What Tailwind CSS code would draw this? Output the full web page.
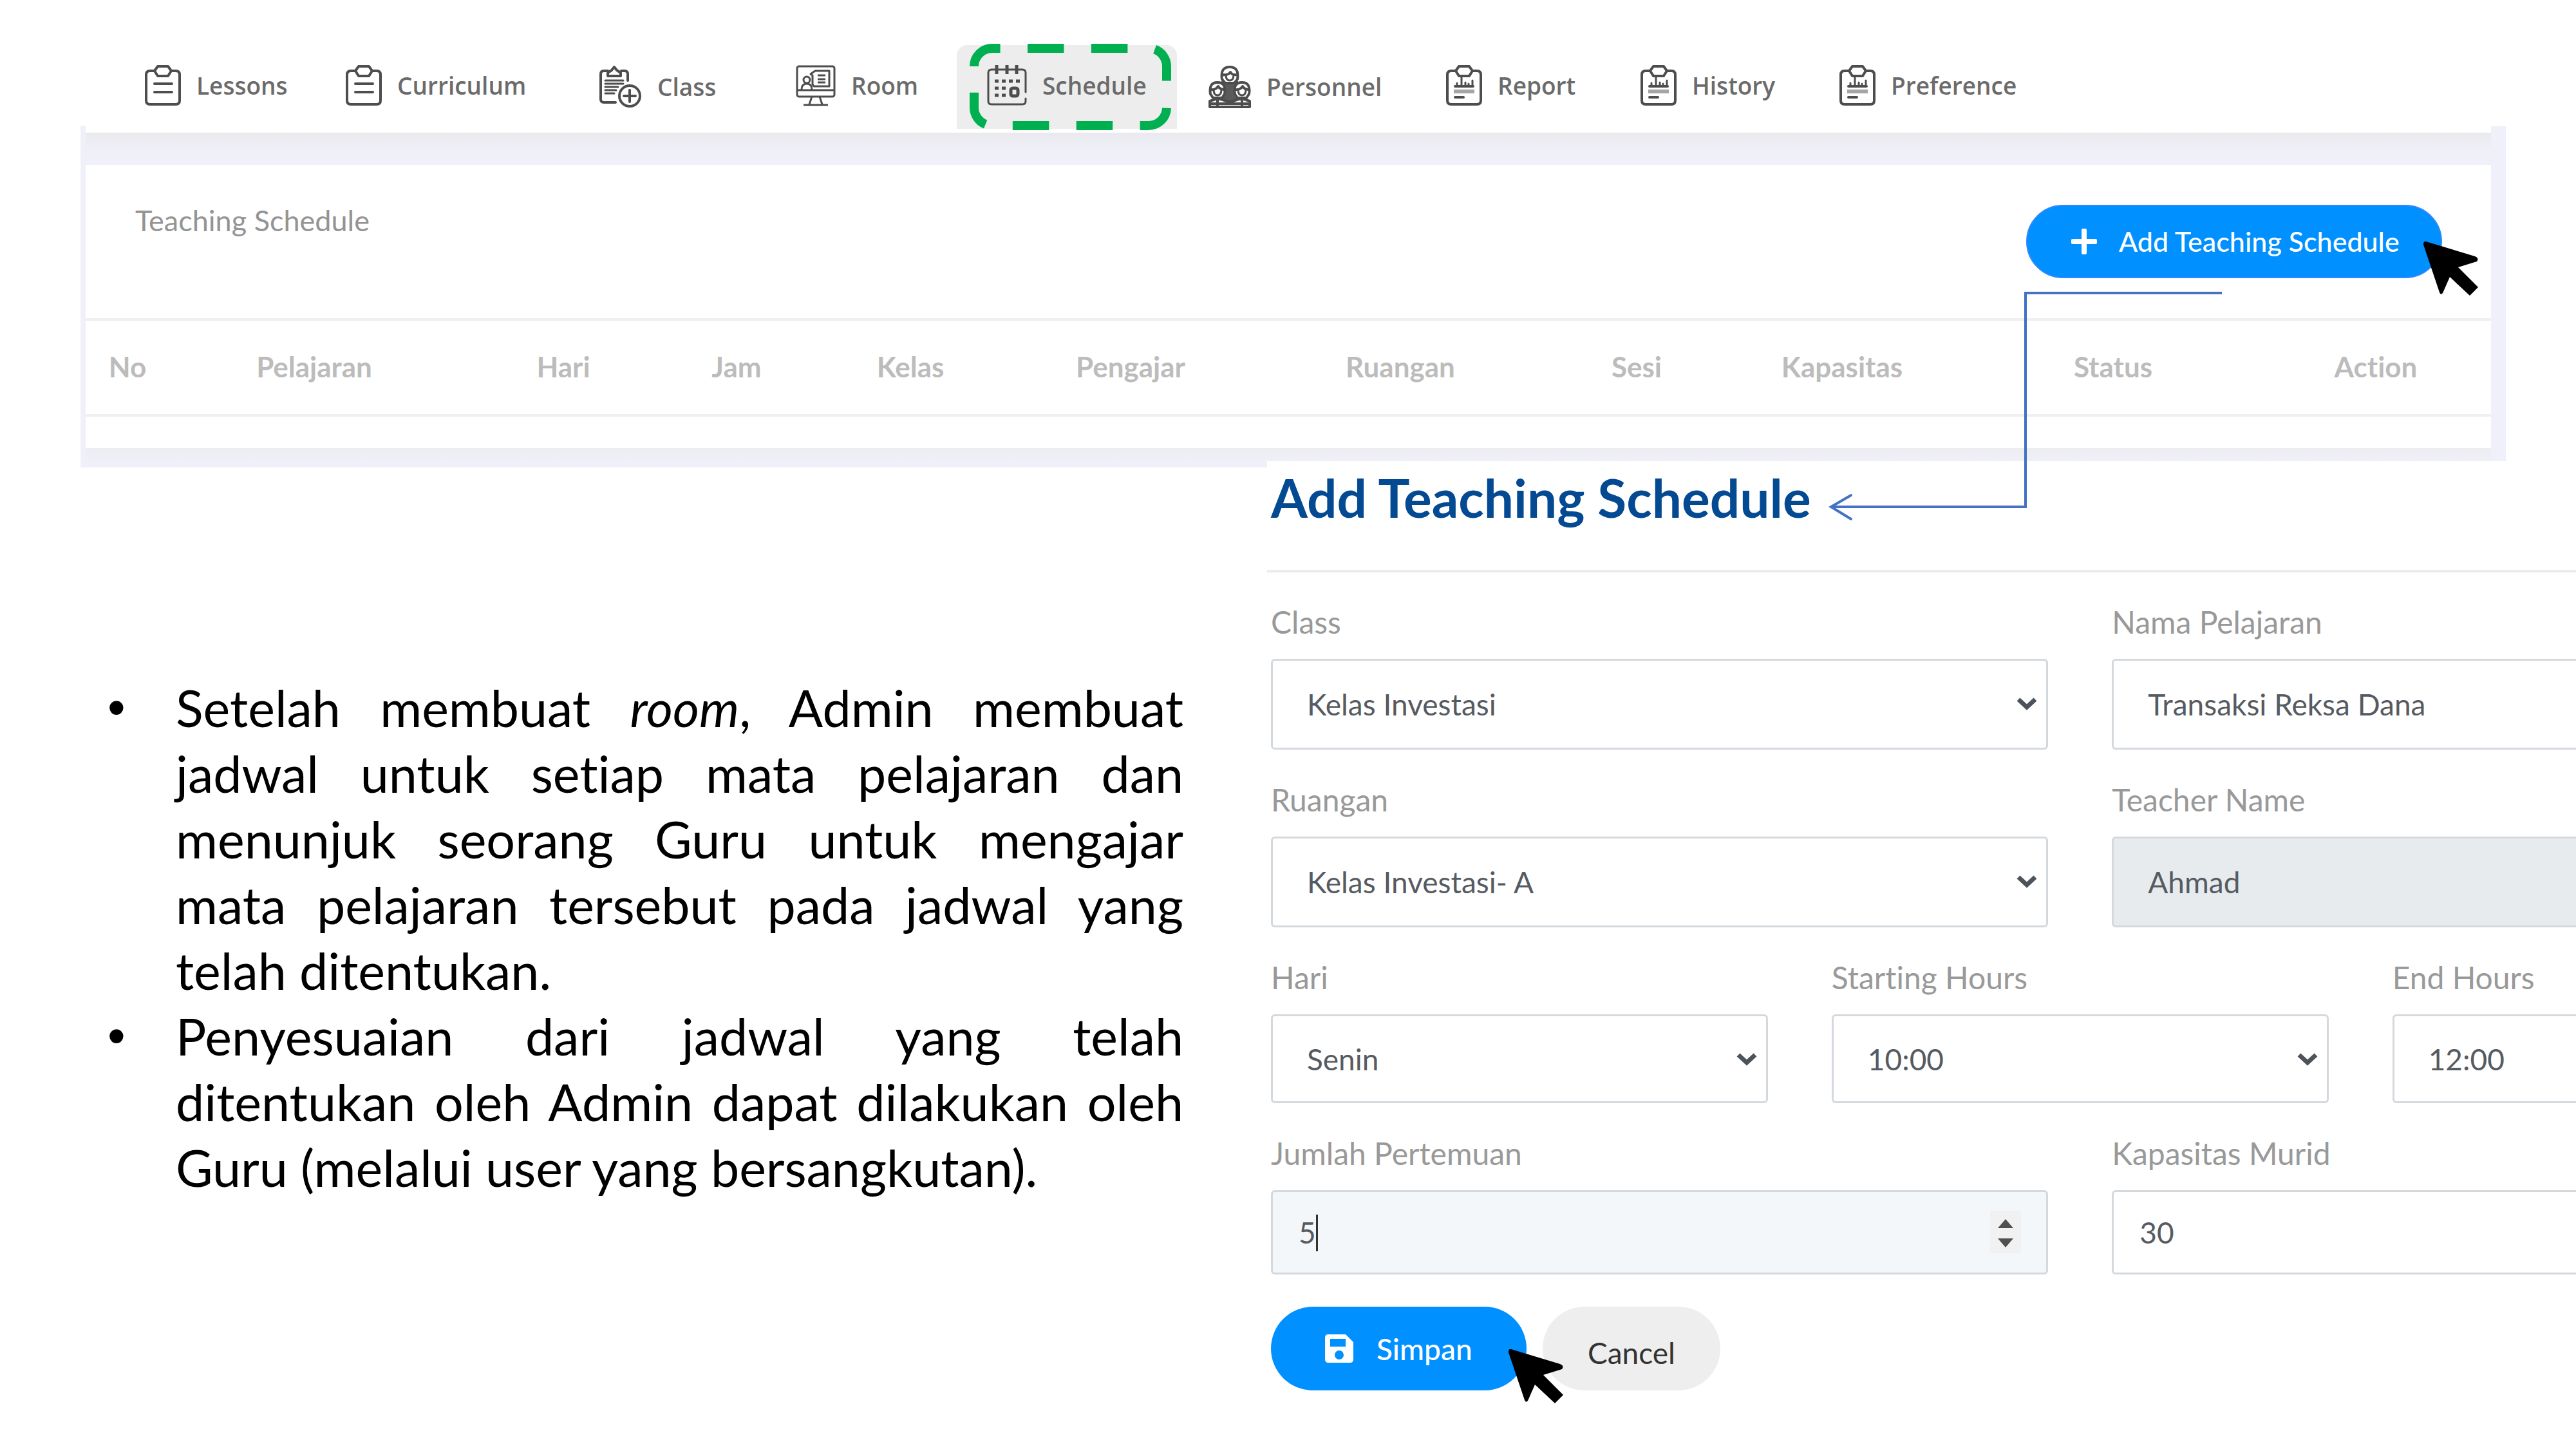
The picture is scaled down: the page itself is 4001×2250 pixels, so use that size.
<!DOCTYPE html>
<html lang="id">
<head>
<meta charset="utf-8">
<title>Teaching Schedule</title>
<script src="https://cdn.jsdelivr.net/npm/@tailwindcss/browser@4"></script>
</head>
<body class="bg-white font-['Lato',sans-serif] overflow-x-hidden [font-variant-ligatures:none]">

<svg class="hidden" aria-hidden="true">
  <symbol id="clipboard" viewBox="0 0 56 64">
    <g fill="none" stroke="#4d4d4d" stroke-width="4" stroke-linecap="round" stroke-linejoin="round">
      <path d="M15 9H8q-6 0-6 6v40q0 6 6 6h40q6 0 6-6V15q0-6-6-6h-7"/>
      <path d="M20 2h16l5 7-5 8H20l-5-8z"/>
      <path d="M15 29h27M15 42h27"/>
    </g>
  </symbol>
  <symbol id="report" viewBox="0 0 56 64">
    <g fill="none" stroke="#4d4d4d" stroke-width="4" stroke-linecap="round" stroke-linejoin="round">
      <path d="M15 9H8q-6 0-6 6v40q0 6 6 6h40q6 0 6-6V15q0-6-6-6h-7"/>
      <path d="M20 2h16l5 7-5 8H20l-5-8z"/>
      <path d="M14 33h28M14 50h13"/>
      <path stroke-width="3" d="M17 32v-4M24 32V19M30 32v-5M35 32v-3M41 32v-8"/>
      <path stroke="#a5a5a5" stroke-width="6" stroke-linecap="butt" d="M12 41h32"/>
    </g>
  </symbol>
  <symbol id="cursor" viewBox="0 0 86 86">
    <path d="M4 0 80 23q7 3 3 8L54 40l31 31-13 13-31-29-11 25q-3 4-5-1L0 5Q0-1 4 0z"/>
  </symbol>
  <symbol id="chevron" viewBox="0 0 32 20">
    <path d="M3 3l13 12L29 3" fill="none" stroke="#4d535a" stroke-width="7"/>
  </symbol>
</svg>

<header class="h-[196px] pt-[68px]">
  <nav class="grid grid-cols-[312fr_394fr_305fr_297fr_344fr_369fr_302fr_309fr_1144fr] pl-[225px] h-[130px] items-center text-[37px] leading-[48px] font-semibold text-[#6b6b6b] font-['Open_Sans',sans-serif]">
    <a href="#" class="flex items-center gap-[24px]"><svg class="w-[56px] h-[64px]"><use href="#clipboard"/></svg>Lessons</a>
    <a href="#" class="flex items-center gap-[24px]"><svg class="w-[56px] h-[64px]"><use href="#clipboard"/></svg>Curriculum</a>
    <a href="#" class="flex items-center gap-[24px] pt-[4px]">
      <svg class="w-[66px] h-[66px]" viewBox="0 0 66 66" fill="none" stroke="#4d4d4d" stroke-width="4" stroke-linecap="round" stroke-linejoin="round">
        <path d="M13 8H7q-5 0-5 5v39q0 5 5 5h18M34 8h5q5 0 5 5v10"/>
        <path d="M23 2l4 5 6 4v5H13v-5l6-4z"/>
        <path stroke-width="3" d="M9 23h28M9 28h28M9 33h20M9 38h17M9 43h14"/>
        <circle cx="47" cy="47" r="16"/><path d="M47 38v18M38 47h18"/>
      </svg>Class</a>
    <a href="#" class="flex items-center gap-[24px]">
      <svg class="w-[62px] h-[64px]" viewBox="0 0 62 64" fill="none" stroke="#4d4d4d" stroke-width="3" stroke-linejoin="round">
        <rect x="2" y="2" width="58" height="47" rx="3"/><path d="M2 39h58M25 49l-4 12M37 49l4 12M12 62h38"/>
        <circle cx="17" cy="23" r="5"/><path d="M9 38q0-9 8-9t8 9M28 33l-2-3V16l-3-2 7-5h22v24z"/><path d="M34 16h12M34 22h12M34 27h12"/>
      </svg>Room</a>
    <a href="#" class="relative flex items-center gap-[24px]" aria-current="page">
      <span class="absolute -left-[47px] -top-[31px] w-[342px] h-[130px] rounded-t-[16px] bg-[#ededed]"></span>
      <svg class="absolute -left-[27px] -top-[33px] w-[313px] h-[134px] z-10" viewBox="0 0 313 134"><path d="M7 35A28 28 0 0 1 35 7H278A28 28 0 0 1 306 35V99A28 28 0 0 1 278 127H35A28 28 0 0 1 7 99Z" fill="none" stroke="#00b050" stroke-width="14" stroke-dasharray="56.5 42.4"/></svg>
      <svg class="relative w-[62px] h-[64px]" viewBox="0 0 62 64" fill="none" stroke="#4d4d4d" stroke-width="3" stroke-linecap="round">
        <path d="M60 42V12q0-5-5-5H7q-5 0-5 5v44q0 5 5 5h48q5 0 5-5v-4"/>
        <path stroke-width="5" stroke-linecap="butt" d="M15 0v14M31 0v14M46 0v14"/>
        <path stroke-width="5" stroke-linecap="butt" stroke-dasharray="6 5" d="M12 25h39M12 36h18M12 47h18"/>
        <rect x="37" y="36" width="11" height="12" rx="3" stroke-width="5"/>
      </svg><span class="relative">Schedule</span></a>
    <a href="#" class="flex items-center gap-[24px] pt-[4px]">
      <svg class="w-[66px] h-[66px]" viewBox="0 0 66 66" fill="none" stroke="#4d4d4d" stroke-linejoin="round">
        <path fill="#5a5a5a" stroke="none" d="M20 24h26l2 32H18z"/>
        <g stroke-width="4" fill="#fff">
          <path d="M21 21Q18 2 33 2t12 19l-5 6H26z"/><path d="M3 44Q0 26 14 26t11 18l-4 6H7z"/><path d="M41 44q-3-18 11-18t11 18l-4 6H45z"/>
          <path d="M2 64V55l9-3h8l9 3h10l9-3h8l9 3v9z"/>
        </g>
        <path stroke-width="4" d="M22 14q9 1 12-4 3 5 10 4M4 37q7 1 11-5 3 5 9 5M42 37q7 1 11-5 3 5 9 5M14 50v13M52 50v13M2 59h62"/>
        <path stroke-width="3" d="M27 14q0 9 6 9t6-9M8 37q0 9 6 9t6-9M46 37q0 9 6 9t6-9"/>
      </svg>Personnel</a>
    <a href="#" class="flex items-center gap-[24px]"><svg class="w-[56px] h-[64px]"><use href="#report"/></svg>Report</a>
    <a href="#" class="flex items-center gap-[24px]"><svg class="w-[56px] h-[64px]"><use href="#report"/></svg>History</a>
    <a href="#" class="flex items-center gap-[24px]"><svg class="w-[56px] h-[64px]"><use href="#report"/></svg>Preference</a>
  </nav>
</header>

<section class="ml-[125px] mr-[109px] pl-[8px] pr-[23px] bg-[#f0f0fa]">
  <div class="h-[10px] bg-white"></div>
  <div class="h-[50px] bg-linear-to-b from-[#e9e9ee] to-[#f0f0fa] to-60%"></div>
  <div class="bg-white h-[440px]">
    <div class="flex justify-between items-start h-[238px] pl-[77px] pr-[76px] pt-[62px]">
      <h2 class="text-[45px] leading-[48px] text-[#949494]">Teaching Schedule</h2>
      <div class="relative">
        <button type="button" class="flex items-center gap-[34px] w-[646px] h-[114px] pl-[68px] rounded-full bg-[#0090ff] border-2 border-[#3388ff] text-white text-[43px] font-medium whitespace-nowrap">
          <svg class="w-[40px] h-[40px]" viewBox="0 0 40 40"><path d="M20 3v34M3 20h34" stroke="#fff" stroke-width="8" stroke-linecap="round"/></svg>
          Add Teaching Schedule</button>
        <svg class="absolute left-[617px] top-[57px] w-[86px] h-[86px] z-10"><use href="#cursor"/></svg>
      </div>
    </div>
    <table class="w-full table-fixed border-y-4 border-[#efefef]">
      <colgroup><col class="w-[130px]"><col class="w-[450px]"><col class="w-[324px]"><col class="w-[214px]"><col class="w-[326px]"><col class="w-[358px]"><col class="w-[480px]"><col class="w-[254px]"><col class="w-[384px]"><col class="w-[458px]"><col class="w-[358px]"></colgroup>
      <thead><tr class="h-[149px] text-[44px] leading-[60px] text-[#bcbcbc] font-bold"><th class="pb-[4px]">No</th><th class="pb-[4px]">Pelajaran</th><th class="pb-[4px]">Hari</th><th class="pb-[4px]">Jam</th><th class="pb-[4px]">Kelas</th><th class="pb-[4px]">Pengajar</th><th class="pb-[4px]">Ruangan</th><th class="pb-[4px]">Sesi</th><th class="pb-[4px]">Kapasitas</th><th class="pb-[4px]">Status</th><th class="pb-[4px]">Action</th></tr></thead>
    </table>
  </div>
  <div class="h-[30px] bg-linear-to-b from-[#ececf1] to-[#f1f1fb]"></div>
</section>

<main class="grid grid-cols-[1968fr_2033fr] -mt-[10px]">
  <article class="pl-[167px] pr-[130px] pt-[332px]">
    <ul class="text-[79px] leading-[102px] text-black text-justify">
      <li class="flex"><span class="w-[106px] shrink-0 font-['Liberation_Sans',sans-serif]">•</span><p class="grow [text-align-last:justify]">Setelah membuat <em>room</em>, Admin membuat<br>jadwal untuk setiap mata pelajaran dan<br>menunjuk seorang Guru untuk mengajar<br>mata pelajaran tersebut pada jadwal yang<span class="block [text-align-last:left]">telah ditentukan.</span></p></li>
      <li class="flex"><span class="w-[106px] shrink-0 font-['Liberation_Sans',sans-serif]">•</span><p class="grow [text-align-last:justify]">Penyesuaian dari jadwal yang telah<br>ditentukan oleh Admin dapat dilakukan oleh<span class="block [text-align-last:left]">Guru (melalui user yang bersangkutan).</span></p></li>
    </ul>
  </article>

  <section class="relative bg-white min-w-0">
    <h1 class="h-[169px] pt-[8px] pl-[6px] text-[82px] leading-[96px] font-bold text-[#044a92]">Add Teaching Schedule</h1>
    <svg class="absolute left-[872px] -top-[265px] w-[614px] h-[358px]" viewBox="0 0 614 358" fill="none" stroke="#4472c4" stroke-width="4"><path d="M611 4H306V336H4"/><path stroke-linecap="round" d="M35 318L4 336l31 19"/></svg>
    <form class="border-t-4 border-[#ececec] pl-[6px] pt-[49px] overflow-hidden text-[46px] text-[#565b61]">
      <div class="w-[124%] flex flex-col gap-[50px]">
        <div class="grid grid-cols-2 gap-[99px]">
          <div>
            <label for="class" class="block h-[60px] leading-[56px] mb-[25px] text-[48px] text-[#999]">Class</label>
            <div class="relative"><select id="class" class="block w-full h-[141px] appearance-none border-3 border-[#d4d9de] rounded-[6px] bg-white pl-[53px]"><option>Kelas Investasi</option></select><svg class="absolute right-[17px] top-[60px] w-[32px] h-[20px]"><use href="#chevron"/></svg></div>
          </div>
          <div>
            <label for="lesson" class="block h-[60px] leading-[56px] mb-[25px] text-[48px] text-[#999]">Nama Pelajaran</label>
            <select id="lesson" class="block w-full h-[141px] appearance-none border-3 border-[#d4d9de] rounded-[6px] bg-white pl-[53px]"><option>Transaksi Reksa Dana</option></select>
          </div>
        </div>
        <div class="grid grid-cols-2 gap-[99px]">
          <div>
            <label for="room" class="block h-[60px] leading-[56px] mb-[25px] text-[48px] text-[#999]">Ruangan</label>
            <div class="relative"><select id="room" class="block w-full h-[141px] appearance-none border-3 border-[#d4d9de] rounded-[6px] bg-white pl-[53px]"><option>Kelas Investasi- A</option></select><svg class="absolute right-[17px] top-[60px] w-[32px] h-[20px]"><use href="#chevron"/></svg></div>
          </div>
          <div>
            <label for="teacher" class="block h-[60px] leading-[56px] mb-[25px] text-[48px] text-[#999]">Teacher Name</label>
            <select id="teacher" disabled class="block w-full h-[141px] appearance-none border-3 border-[#d4d9de] rounded-[6px] bg-[#e7ebee] pl-[53px] opacity-100"><option>Ahmad</option></select>
          </div>
        </div>
        <div class="grid grid-cols-3 gap-[99px]">
          <div>
            <label for="day" class="block h-[60px] leading-[56px] mb-[25px] text-[48px] text-[#999]">Hari</label>
            <div class="relative"><select id="day" class="block w-full h-[138px] appearance-none border-3 border-[#d4d9de] rounded-[6px] bg-white pl-[53px]"><option>Senin</option></select><svg class="absolute right-[17px] top-[60px] w-[32px] h-[20px]"><use href="#chevron"/></svg></div>
          </div>
          <div>
            <label for="start" class="block h-[60px] leading-[56px] mb-[25px] text-[48px] text-[#999]">Starting Hours</label>
            <div class="relative"><select id="start" class="block w-full h-[138px] appearance-none border-3 border-[#d4d9de] rounded-[6px] bg-white pl-[53px]"><option>10:00</option></select><svg class="absolute right-[17px] top-[60px] w-[32px] h-[20px]"><use href="#chevron"/></svg></div>
          </div>
          <div>
            <label for="end" class="block h-[60px] leading-[56px] mb-[25px] text-[48px] text-[#999]">End Hours</label>
            <select id="end" class="block w-full h-[138px] appearance-none border-3 border-[#d4d9de] rounded-[6px] bg-white pl-[53px]"><option>12:00</option></select>
          </div>
        </div>
        <div class="grid grid-cols-2 gap-[99px]">
          <div>
            <label for="meetings" class="block h-[60px] leading-[56px] mb-[25px] text-[48px] text-[#999]">Jumlah Pertemuan</label>
            <div class="relative">
              <input id="meetings" type="number" value="5" class="block w-full h-[131px] [appearance:textfield] border-3 border-[#d4d9de] rounded-[6px] bg-[#f3f7fa] pl-[40px]">
              <span class="absolute left-[70px] top-[38px] w-[3px] h-[57px] bg-[#333]"></span>
              <svg class="absolute right-[42px] top-[32px] w-[48px] h-[66px] bg-[#f1f1f1]" viewBox="0 0 48 66" fill="#505050"><path d="M24 13l12 14H12zM24 57L12 43h24z"/></svg>
            </div>
          </div>
          <div>
            <label for="capacity" class="block h-[60px] leading-[56px] mb-[25px] text-[48px] text-[#999]">Kapasitas Murid</label>
            <input id="capacity" type="number" value="30" class="block w-full h-[131px] [appearance:textfield] border-3 border-[#d4d9de] rounded-[6px] bg-white pl-[40px]">
          </div>
        </div>
        <div class="flex gap-[25px] pb-[70px]">
          <div class="relative">
            <button type="submit" class="flex items-center gap-[36px] w-[397px] h-[130px] pl-[84px] rounded-full bg-[#0090ff] text-white font-medium">
              <svg class="w-[44px] h-[44px]" viewBox="0 0 44 44"><path fill="#fff" fill-rule="evenodd" d="M5 0h27l12 12v27q0 5-5 5H5q-5 0-5-5V5q0-5 5-5zM8 7v12h24V7zM22 25a7 7 0 1 0 0 14 7 7 0 0 0 0-14z"/></svg>
              Simpan</button>
            <svg class="absolute left-[369px] top-[66px] w-[86px] h-[86px] z-10"><use href="#cursor"/></svg>
          </div>
          <button type="button" class="w-[276px] h-[130px] pt-[12px] rounded-full bg-[#eeeeee] text-[#333]">Cancel</button>
        </div>
      </div>
    </form>
  </section>
</main>
</body>
</html>
